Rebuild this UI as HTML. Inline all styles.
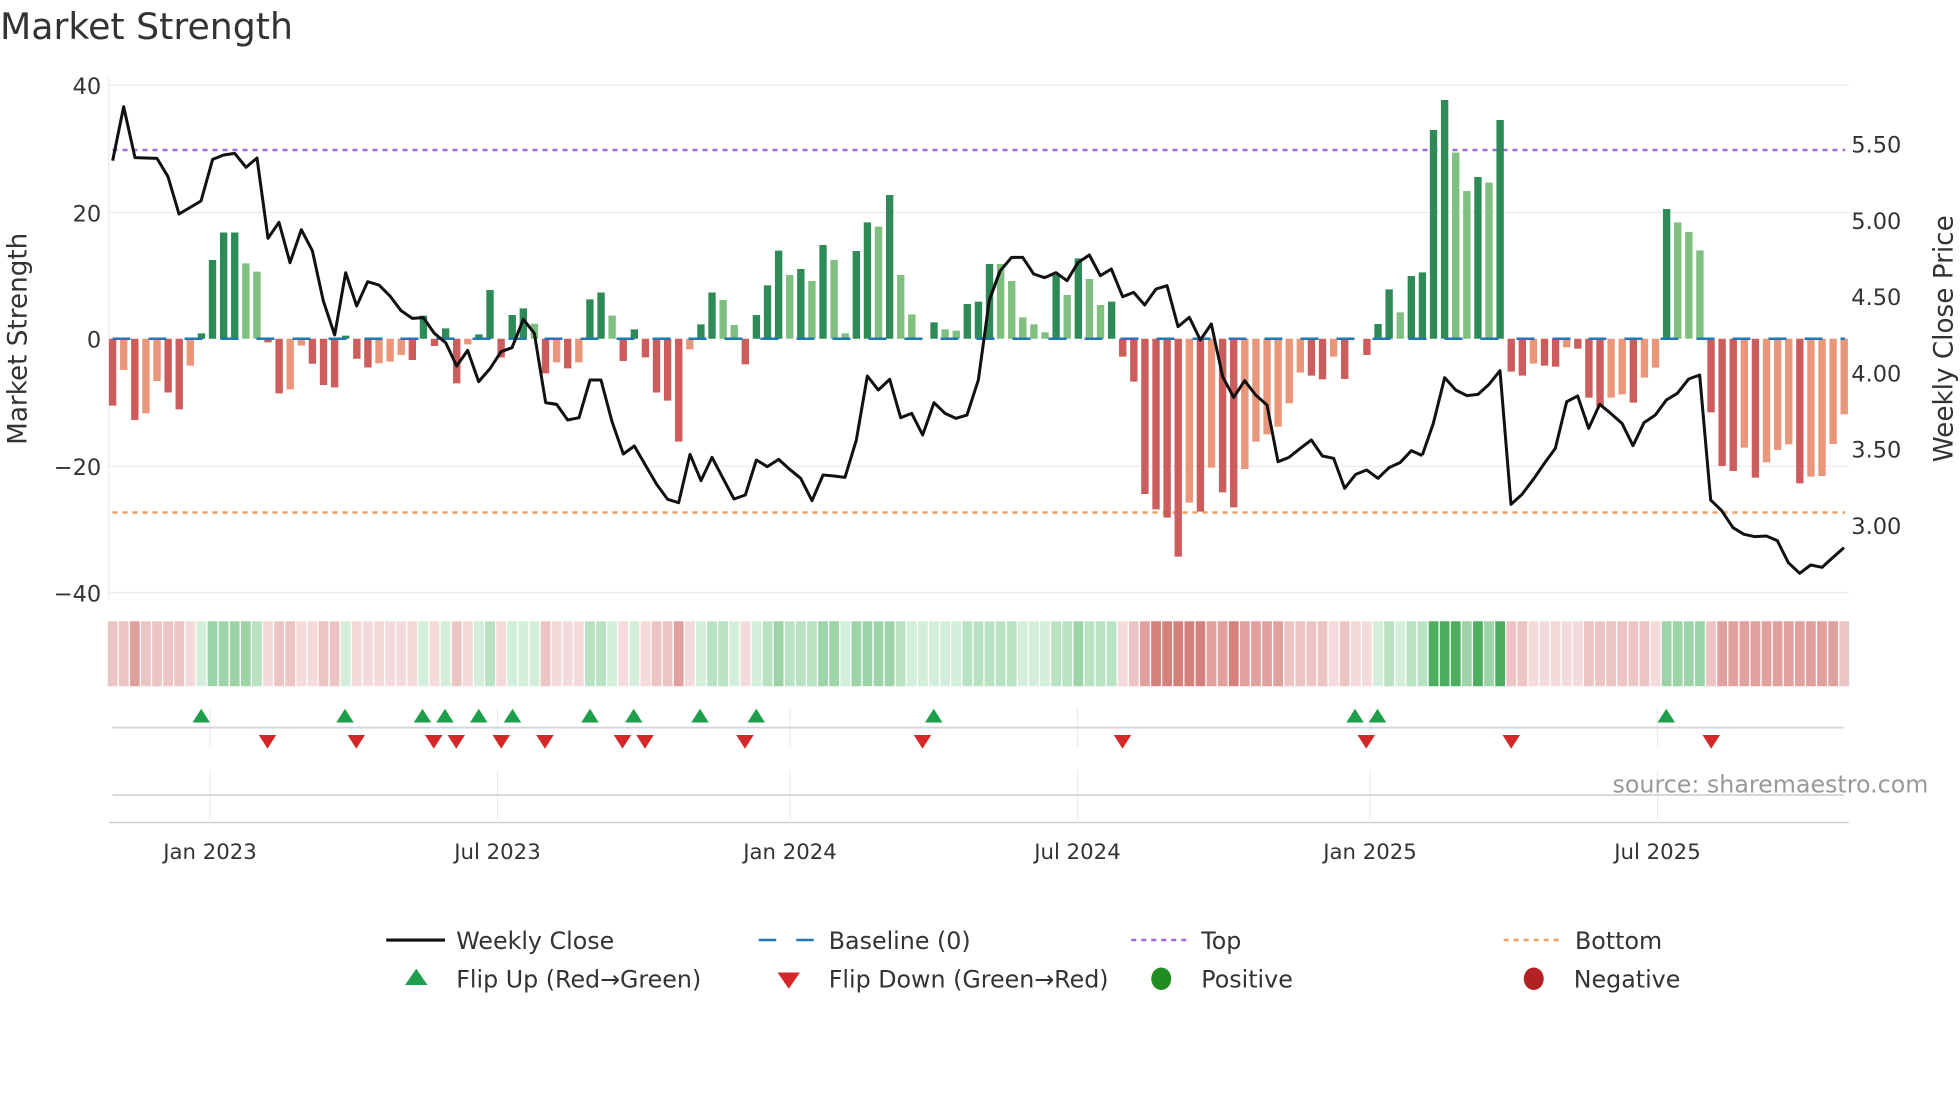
<!DOCTYPE html>
<html><head><meta charset="utf-8"><style>
html,body{margin:0;padding:0;background:#fff;}
svg{display:block;font-family:"DejaVu Sans","Liberation Sans",sans-serif;}
.DG{fill:#2e8b57}.LG{fill:#7fbf7f}.DR{fill:#cd5c5c}.LR{fill:#e9967a}
.g1{fill:#d3eedb}.g2{fill:#b8e2c2}.g3{fill:#9cd4a8}.g4{fill:#4cae5e}
.r1{fill:#f4dada}.r2{fill:#ecc4c4}.r3{fill:#e0a09e}.r4{fill:#d4807b}
.tk{font-size:18px;fill:#333}
</style></head><body>
<svg width="1960" height="1102" viewBox="0 0 1960 1102" xmlns="http://www.w3.org/2000/svg">
<rect width="1960" height="1102" fill="#fff"/>
<g transform="scale(1.25)">
<text x="0" y="31" font-size="29" fill="#333">Market Strength</text>
<!-- grid -->
<g stroke="#ececec" stroke-width="1">
<line x1="87" y1="68" x2="1479" y2="68"/><line x1="87" y1="170" x2="1479" y2="170"/>
<line x1="87" y1="373" x2="1479" y2="373"/><line x1="87" y1="474" x2="1479" y2="474"/>
<line x1="87" y1="62" x2="87" y2="480"/>
</g>
<g class="tk" text-anchor="end">
<text x="81" y="75">40</text><text x="81" y="177">20</text><text x="81" y="278">0</text>
<text x="81" y="380">−20</text><text x="81" y="481">−40</text>
</g>
<g class="tk">
<text x="1481" y="122">5.50</text><text x="1481" y="183">5.00</text><text x="1481" y="244">4.50</text>
<text x="1481" y="305">4.00</text><text x="1481" y="366">3.50</text><text x="1481" y="427">3.00</text>
</g>
<text transform="translate(21,271) rotate(-90)" text-anchor="middle" font-size="21" fill="#333">Market Strength</text>
<text transform="translate(1562,271) rotate(-90)" text-anchor="middle" font-size="21" fill="#333">Weekly Close Price</text>
<line x1="90" y1="120" x2="1476" y2="120" stroke="#a066e0" stroke-width="2" stroke-dasharray="4,4"/>
<line x1="90" y1="410" x2="1476" y2="410" stroke="#f0a060" stroke-width="2" stroke-dasharray="4,4"/>
<!-- bars -->
<g transform="translate(87.15,0) scale(8.88,1)">
<rect class="DR" x="0" y="271" width=".664" height="53.5"/>
<rect class="LR" x="1" y="271" width=".664" height="25"/>
<rect class="DR" x="2" y="271" width=".664" height="65"/>
<rect class="LR" x="3" y="271" width=".664" height="59.7"/>
<rect class="LR" x="4" y="271" width=".664" height="33.8"/>
<rect class="DR" x="5" y="271" width=".664" height="43"/>
<rect class="DR" x="6" y="271" width=".664" height="56.5"/>
<rect class="LR" x="7" y="271" width=".664" height="21.5"/>
<rect class="DG" x="8" y="266.7" width=".664" height="4.3"/>
<rect class="DG" x="9" y="208" width=".664" height="63"/>
<rect class="DG" x="10" y="186" width=".664" height="85"/>
<rect class="DG" x="11" y="186" width=".664" height="85"/>
<rect class="LG" x="12" y="210.7" width=".664" height="60.3"/>
<rect class="LG" x="13" y="217.3" width=".664" height="53.7"/>
<rect class="DR" x="14" y="271" width=".664" height="2.9"/>
<rect class="DR" x="15" y="271" width=".664" height="43.7"/>
<rect class="LR" x="16" y="271" width=".664" height="40.5"/>
<rect class="LR" x="17" y="271" width=".664" height="5.5"/>
<rect class="DR" x="18" y="271" width=".664" height="20"/>
<rect class="DR" x="19" y="271" width=".664" height="37"/>
<rect class="DR" x="20" y="271" width=".664" height="39"/>
<rect class="DG" x="21" y="268.5" width=".664" height="2.5"/>
<rect class="DR" x="22" y="271" width=".664" height="16"/>
<rect class="DR" x="23" y="271" width=".664" height="23"/>
<rect class="LR" x="24" y="271" width=".664" height="19.7"/>
<rect class="LR" x="25" y="271" width=".664" height="18.3"/>
<rect class="LR" x="26" y="271" width=".664" height="13"/>
<rect class="DR" x="27" y="271" width=".664" height="17"/>
<rect class="DG" x="28" y="252.5" width=".664" height="18.5"/>
<rect class="DR" x="29" y="271" width=".664" height="5.8"/>
<rect class="DG" x="30" y="262.7" width=".664" height="8.3"/>
<rect class="DR" x="31" y="271" width=".664" height="35.7"/>
<rect class="LR" x="32" y="271" width=".664" height="4.5"/>
<rect class="DG" x="33" y="267.5" width=".664" height="3.5"/>
<rect class="DG" x="34" y="232" width=".664" height="39"/>
<rect class="DR" x="35" y="271" width=".664" height="15"/>
<rect class="DG" x="36" y="252" width=".664" height="19"/>
<rect class="DG" x="37" y="246.7" width=".664" height="24.3"/>
<rect class="LG" x="38" y="259" width=".664" height="12"/>
<rect class="DR" x="39" y="271" width=".664" height="27.7"/>
<rect class="LR" x="40" y="271" width=".664" height="18.9"/>
<rect class="DR" x="41" y="271" width=".664" height="23.7"/>
<rect class="LR" x="42" y="271" width=".664" height="18.9"/>
<rect class="DG" x="43" y="239.5" width=".664" height="31.5"/>
<rect class="DG" x="44" y="234" width=".664" height="37"/>
<rect class="LG" x="45" y="252.5" width=".664" height="18.5"/>
<rect class="DR" x="46" y="271" width=".664" height="17.8"/>
<rect class="DG" x="47" y="263.5" width=".664" height="7.5"/>
<rect class="DR" x="48" y="271" width=".664" height="14.9"/>
<rect class="DR" x="49" y="271" width=".664" height="43"/>
<rect class="DR" x="50" y="271" width=".664" height="49.5"/>
<rect class="DR" x="51" y="271" width=".664" height="82.3"/>
<rect class="LR" x="52" y="271" width=".664" height="8.5"/>
<rect class="DG" x="53" y="259.5" width=".664" height="11.5"/>
<rect class="DG" x="54" y="234" width=".664" height="37"/>
<rect class="LG" x="55" y="240" width=".664" height="31"/>
<rect class="LG" x="56" y="260" width=".664" height="11"/>
<rect class="DR" x="57" y="271" width=".664" height="20.5"/>
<rect class="DG" x="58" y="252" width=".664" height="19"/>
<rect class="DG" x="59" y="228.3" width=".664" height="42.7"/>
<rect class="DG" x="60" y="200.5" width=".664" height="70.5"/>
<rect class="LG" x="61" y="220" width=".664" height="51"/>
<rect class="DG" x="62" y="215.2" width=".664" height="55.8"/>
<rect class="LG" x="63" y="224.8" width=".664" height="46.2"/>
<rect class="DG" x="64" y="196" width=".664" height="75"/>
<rect class="LG" x="65" y="208" width=".664" height="63"/>
<rect class="LG" x="66" y="266.7" width=".664" height="4.3"/>
<rect class="DG" x="67" y="200.8" width=".664" height="70.2"/>
<rect class="DG" x="68" y="177.9" width=".664" height="93.1"/>
<rect class="LG" x="69" y="181.3" width=".664" height="89.7"/>
<rect class="DG" x="70" y="156" width=".664" height="115"/>
<rect class="LG" x="71" y="220" width=".664" height="51"/>
<rect class="LG" x="72" y="251.5" width=".664" height="19.5"/>
<rect class="DG" x="74" y="257.9" width=".664" height="13.1"/>
<rect class="LG" x="75" y="263.5" width=".664" height="7.5"/>
<rect class="LG" x="76" y="264.5" width=".664" height="6.5"/>
<rect class="DG" x="77" y="243.2" width=".664" height="27.8"/>
<rect class="DG" x="78" y="241.3" width=".664" height="29.7"/>
<rect class="DG" x="79" y="211.2" width=".664" height="59.8"/>
<rect class="LG" x="80" y="211.2" width=".664" height="59.8"/>
<rect class="LG" x="81" y="224.8" width=".664" height="46.2"/>
<rect class="LG" x="82" y="253.9" width=".664" height="17.1"/>
<rect class="LG" x="83" y="259.5" width=".664" height="11.5"/>
<rect class="LG" x="84" y="265.9" width=".664" height="5.1"/>
<rect class="DG" x="85" y="220" width=".664" height="51"/>
<rect class="LG" x="86" y="236" width=".664" height="35"/>
<rect class="DG" x="87" y="206.7" width=".664" height="64.3"/>
<rect class="LG" x="88" y="223.2" width=".664" height="47.8"/>
<rect class="LG" x="89" y="244" width=".664" height="27"/>
<rect class="DG" x="90" y="241.3" width=".664" height="29.7"/>
<rect class="DR" x="91" y="271" width=".664" height="14.3"/>
<rect class="DR" x="92" y="271" width=".664" height="34.3"/>
<rect class="DR" x="93" y="271" width=".664" height="124.2"/>
<rect class="DR" x="94" y="271" width=".664" height="136.5"/>
<rect class="DR" x="95" y="271" width=".664" height="143.1"/>
<rect class="DR" x="96" y="271" width=".664" height="174.3"/>
<rect class="LR" x="97" y="271" width=".664" height="131.1"/>
<rect class="DR" x="98" y="271" width=".664" height="138.3"/>
<rect class="LR" x="99" y="271" width=".664" height="103.1"/>
<rect class="DR" x="100" y="271" width=".664" height="122.9"/>
<rect class="DR" x="101" y="271" width=".664" height="134.9"/>
<rect class="LR" x="102" y="271" width=".664" height="104.2"/>
<rect class="LR" x="103" y="271" width=".664" height="82.3"/>
<rect class="LR" x="104" y="271" width=".664" height="76.5"/>
<rect class="LR" x="105" y="271" width=".664" height="70.3"/>
<rect class="LR" x="106" y="271" width=".664" height="51.7"/>
<rect class="LR" x="107" y="271" width=".664" height="27.1"/>
<rect class="DR" x="108" y="271" width=".664" height="29.5"/>
<rect class="DR" x="109" y="271" width=".664" height="32.5"/>
<rect class="LR" x="110" y="271" width=".664" height="14.3"/>
<rect class="DR" x="111" y="271" width=".664" height="32.2"/>
<rect class="DR" x="113" y="271" width=".664" height="13"/>
<rect class="DG" x="114" y="259.2" width=".664" height="11.8"/>
<rect class="DG" x="115" y="231.5" width=".664" height="39.5"/>
<rect class="LG" x="116" y="249.9" width=".664" height="21.1"/>
<rect class="DG" x="117" y="220.8" width=".664" height="50.2"/>
<rect class="DG" x="118" y="217.9" width=".664" height="53.1"/>
<rect class="DG" x="119" y="104" width=".664" height="167"/>
<rect class="DG" x="120" y="80" width=".664" height="191"/>
<rect class="LG" x="121" y="122.1" width=".664" height="148.9"/>
<rect class="LG" x="122" y="152.8" width=".664" height="118.2"/>
<rect class="DG" x="123" y="141.6" width=".664" height="129.4"/>
<rect class="LG" x="124" y="146.1" width=".664" height="124.9"/>
<rect class="DG" x="125" y="96" width=".664" height="175"/>
<rect class="DR" x="126" y="271" width=".664" height="26.3"/>
<rect class="DR" x="127" y="271" width=".664" height="29.5"/>
<rect class="LR" x="128" y="271" width=".664" height="19.9"/>
<rect class="DR" x="129" y="271" width=".664" height="21.5"/>
<rect class="DR" x="130" y="271" width=".664" height="22.3"/>
<rect class="LR" x="131" y="271" width=".664" height="6.9"/>
<rect class="DR" x="132" y="271" width=".664" height="7.9"/>
<rect class="DR" x="133" y="271" width=".664" height="47.1"/>
<rect class="DR" x="134" y="271" width=".664" height="54.3"/>
<rect class="LR" x="135" y="271" width=".664" height="47.1"/>
<rect class="LR" x="136" y="271" width=".664" height="44.5"/>
<rect class="DR" x="137" y="271" width=".664" height="51.1"/>
<rect class="LR" x="138" y="271" width=".664" height="31.1"/>
<rect class="LR" x="139" y="271" width=".664" height="23.1"/>
<rect class="DG" x="140" y="167.2" width=".664" height="103.8"/>
<rect class="LG" x="141" y="177.9" width=".664" height="93.1"/>
<rect class="LG" x="142" y="185.6" width=".664" height="85.4"/>
<rect class="LG" x="143" y="200.3" width=".664" height="70.7"/>
<rect class="DR" x="144" y="271" width=".664" height="58.9"/>
<rect class="DR" x="145" y="271" width=".664" height="101.8"/>
<rect class="DR" x="146" y="271" width=".664" height="105.8"/>
<rect class="LR" x="147" y="271" width=".664" height="87.1"/>
<rect class="DR" x="148" y="271" width=".664" height="111.1"/>
<rect class="LR" x="149" y="271" width=".664" height="98.9"/>
<rect class="LR" x="150" y="271" width=".664" height="89"/>
<rect class="LR" x="151" y="271" width=".664" height="84.5"/>
<rect class="DR" x="152" y="271" width=".664" height="115.7"/>
<rect class="LR" x="153" y="271" width=".664" height="110.3"/>
<rect class="LR" x="154" y="271" width=".664" height="109.8"/>
<rect class="LR" x="155" y="271" width=".664" height="84.2"/>
<rect class="LR" x="156" y="271" width=".664" height="60.5"/>
</g>
<line x1="90" y1="271" x2="1476" y2="271" stroke="#1f77b4" stroke-width="2" stroke-dasharray="14.4,14.4"/>
<!-- price line -->
<g fill="none" stroke="#111" stroke-width="9" stroke-linejoin="round">
<polyline transform="translate(80,64) scale(0.26667)" points="38,242 71,80 105,233 171,235 204,290 237,402 303,363 338,238 371,225 404,220 438,262 471,234 504,475 537,427 570,548 604,449 637,512 670,663 704,765 737,578 770,678 803,605 837,615 870,648 903,692 937,715 970,713 1003,760 1037,788 1070,858 1103,811 1136,905 1170,866 1203,815 1236,803 1270,718 1303,760 1337,968 1370,973"/>
<polyline transform="translate(432,64) scale(0.26667)" points="17,968 50,973 83,1020 117,1013 150,900 183,900 216,1025 250,1122 283,1098 316,1155 350,1213 383,1258 416,1268 450,1123 483,1202 516,1132 549,1195 582,1257 616,1245 649,1140 682,1160 716,1138 749,1168 782,1195 816,1262 849,1185 882,1188 915,1192 949,1080 982,888 1015,930 1049,898 1082,1013 1115,1000 1148,1065 1182,968 1215,1000 1248,1015 1281,1005 1315,900 1348,660 1381,570"/>
<polyline transform="translate(784,64) scale(0.26667)" points="28,660 61,572 95,532 128,532 161,582 194,593 228,578 261,602 294,548 328,525 361,587 394,567 428,650 461,637 494,675 528,627 561,617 594,740 628,712 661,780 694,732 728,890 761,952 794,902 827,945 861,975 894,1145 927,1132 961,1105 994,1080 1027,1128 1061,1135 1094,1225 1127,1183 1160,1170 1194,1195 1227,1163 1260,1148 1294,1112 1327,1127"/>
<polyline transform="translate(1136,64) scale(0.26667)" points="7,1125 40,1030 74,893 107,930 141,947 174,943 207,913 240,872 273,1273 306,1243 340,1198 373,1150 406,1105 440,965 473,948 506,1045 539,973 572,1000 606,1030 639,1097 672,1028 706,1005 739,960 772,940 806,897 839,885 872,1260 905,1292 939,1343 972,1363 1005,1370 1039,1368 1072,1382 1105,1448 1139,1480 1172,1455 1206,1462 1239,1432 1272,1403"/>
</g>
<!-- heat strip -->
<g transform="translate(86.2,0) scale(8.88,1)">
<rect class="r2" x="0" y="497" width=".88" height="52"/><rect class="r2" x="1" y="497" width=".88" height="52"/><rect class="r3" x="2" y="497" width=".88" height="52"/><rect class="r2" x="3" y="497" width=".88" height="52"/><rect class="r2" x="4" y="497" width=".88" height="52"/><rect class="r2" x="5" y="497" width=".88" height="52"/><rect class="r2" x="6" y="497" width=".88" height="52"/><rect class="r1" x="7" y="497" width=".88" height="52"/>
<rect class="g1" x="8" y="497" width=".88" height="52"/><rect class="g3" x="9" y="497" width=".88" height="52"/><rect class="g3" x="10" y="497" width=".88" height="52"/><rect class="g3" x="11" y="497" width=".88" height="52"/><rect class="g3" x="12" y="497" width=".88" height="52"/><rect class="g2" x="13" y="497" width=".88" height="52"/>
<rect class="r1" x="14" y="497" width=".88" height="52"/><rect class="r2" x="15" y="497" width=".88" height="52"/><rect class="r2" x="16" y="497" width=".88" height="52"/><rect class="r1" x="17" y="497" width=".88" height="52"/><rect class="r1" x="18" y="497" width=".88" height="52"/><rect class="r2" x="19" y="497" width=".88" height="52"/><rect class="r2" x="20" y="497" width=".88" height="52"/><rect class="g1" x="21" y="497" width=".88" height="52"/>
<rect class="r1" x="22" y="497" width=".88" height="52"/><rect class="r1" x="23" y="497" width=".88" height="52"/><rect class="r1" x="24" y="497" width=".88" height="52"/><rect class="r1" x="25" y="497" width=".88" height="52"/><rect class="r1" x="26" y="497" width=".88" height="52"/><rect class="r1" x="27" y="497" width=".88" height="52"/><rect class="g1" x="28" y="497" width=".88" height="52"/><rect class="r1" x="29" y="497" width=".88" height="52"/>
<rect class="g1" x="30" y="497" width=".88" height="52"/><rect class="r2" x="31" y="497" width=".88" height="52"/><rect class="r1" x="32" y="497" width=".88" height="52"/><rect class="g1" x="33" y="497" width=".88" height="52"/><rect class="g2" x="34" y="497" width=".88" height="52"/><rect class="r1" x="35" y="497" width=".88" height="52"/><rect class="g1" x="36" y="497" width=".88" height="52"/><rect class="g1" x="37" y="497" width=".88" height="52"/>
<rect class="g1" x="38" y="497" width=".88" height="52"/><rect class="r2" x="39" y="497" width=".88" height="52"/><rect class="r1" x="40" y="497" width=".88" height="52"/><rect class="r1" x="41" y="497" width=".88" height="52"/><rect class="r1" x="42" y="497" width=".88" height="52"/><rect class="g2" x="43" y="497" width=".88" height="52"/><rect class="g2" x="44" y="497" width=".88" height="52"/><rect class="g1" x="45" y="497" width=".88" height="52"/>
<rect class="r1" x="46" y="497" width=".88" height="52"/><rect class="g1" x="47" y="497" width=".88" height="52"/><rect class="r1" x="48" y="497" width=".88" height="52"/><rect class="r2" x="49" y="497" width=".88" height="52"/><rect class="r2" x="50" y="497" width=".88" height="52"/><rect class="r3" x="51" y="497" width=".88" height="52"/><rect class="r1" x="52" y="497" width=".88" height="52"/><rect class="g1" x="53" y="497" width=".88" height="52"/>
<rect class="g2" x="54" y="497" width=".88" height="52"/><rect class="g2" x="55" y="497" width=".88" height="52"/><rect class="g1" x="56" y="497" width=".88" height="52"/><rect class="r1" x="57" y="497" width=".88" height="52"/><rect class="g1" x="58" y="497" width=".88" height="52"/><rect class="g2" x="59" y="497" width=".88" height="52"/><rect class="g3" x="60" y="497" width=".88" height="52"/><rect class="g2" x="61" y="497" width=".88" height="52"/>
<rect class="g2" x="62" y="497" width=".88" height="52"/><rect class="g2" x="63" y="497" width=".88" height="52"/><rect class="g3" x="64" y="497" width=".88" height="52"/><rect class="g3" x="65" y="497" width=".88" height="52"/><rect class="g1" x="66" y="497" width=".88" height="52"/><rect class="g3" x="67" y="497" width=".88" height="52"/><rect class="g3" x="68" y="497" width=".88" height="52"/><rect class="g3" x="69" y="497" width=".88" height="52"/>
<rect class="g3" x="70" y="497" width=".88" height="52"/><rect class="g2" x="71" y="497" width=".88" height="52"/><rect class="g1" x="72" y="497" width=".88" height="52"/><rect class="g1" x="73" y="497" width=".88" height="52"/><rect class="g1" x="74" y="497" width=".88" height="52"/><rect class="g1" x="75" y="497" width=".88" height="52"/><rect class="g1" x="76" y="497" width=".88" height="52"/><rect class="g2" x="77" y="497" width=".88" height="52"/>
<rect class="g2" x="78" y="497" width=".88" height="52"/><rect class="g2" x="79" y="497" width=".88" height="52"/><rect class="g2" x="80" y="497" width=".88" height="52"/><rect class="g2" x="81" y="497" width=".88" height="52"/><rect class="g1" x="82" y="497" width=".88" height="52"/><rect class="g1" x="83" y="497" width=".88" height="52"/><rect class="g1" x="84" y="497" width=".88" height="52"/><rect class="g2" x="85" y="497" width=".88" height="52"/>
<rect class="g2" x="86" y="497" width=".88" height="52"/><rect class="g3" x="87" y="497" width=".88" height="52"/><rect class="g2" x="88" y="497" width=".88" height="52"/><rect class="g2" x="89" y="497" width=".88" height="52"/><rect class="g2" x="90" y="497" width=".88" height="52"/><rect class="r1" x="91" y="497" width=".88" height="52"/><rect class="r2" x="92" y="497" width=".88" height="52"/><rect class="r3" x="93" y="497" width=".88" height="52"/>
<rect class="r4" x="94" y="497" width=".88" height="52"/><rect class="r4" x="95" y="497" width=".88" height="52"/><rect class="r4" x="96" y="497" width=".88" height="52"/><rect class="r4" x="97" y="497" width=".88" height="52"/><rect class="r4" x="98" y="497" width=".88" height="52"/><rect class="r3" x="99" y="497" width=".88" height="52"/><rect class="r3" x="100" y="497" width=".88" height="52"/><rect class="r4" x="101" y="497" width=".88" height="52"/>
<rect class="r3" x="102" y="497" width=".88" height="52"/><rect class="r3" x="103" y="497" width=".88" height="52"/><rect class="r3" x="104" y="497" width=".88" height="52"/><rect class="r3" x="105" y="497" width=".88" height="52"/><rect class="r2" x="106" y="497" width=".88" height="52"/><rect class="r2" x="107" y="497" width=".88" height="52"/><rect class="r2" x="108" y="497" width=".88" height="52"/><rect class="r2" x="109" y="497" width=".88" height="52"/>
<rect class="r1" x="110" y="497" width=".88" height="52"/><rect class="r2" x="111" y="497" width=".88" height="52"/><rect class="r1" x="112" y="497" width=".88" height="52"/><rect class="r1" x="113" y="497" width=".88" height="52"/><rect class="g1" x="114" y="497" width=".88" height="52"/><rect class="g2" x="115" y="497" width=".88" height="52"/><rect class="g1" x="116" y="497" width=".88" height="52"/><rect class="g2" x="117" y="497" width=".88" height="52"/>
<rect class="g2" x="118" y="497" width=".88" height="52"/><rect class="g4" x="119" y="497" width=".88" height="52"/><rect class="g4" x="120" y="497" width=".88" height="52"/><rect class="g4" x="121" y="497" width=".88" height="52"/><rect class="g3" x="122" y="497" width=".88" height="52"/><rect class="g4" x="123" y="497" width=".88" height="52"/><rect class="g3" x="124" y="497" width=".88" height="52"/><rect class="g4" x="125" y="497" width=".88" height="52"/>
<rect class="r2" x="126" y="497" width=".88" height="52"/><rect class="r2" x="127" y="497" width=".88" height="52"/><rect class="r1" x="128" y="497" width=".88" height="52"/><rect class="r1" x="129" y="497" width=".88" height="52"/><rect class="r1" x="130" y="497" width=".88" height="52"/><rect class="r1" x="131" y="497" width=".88" height="52"/><rect class="r1" x="132" y="497" width=".88" height="52"/><rect class="r2" x="133" y="497" width=".88" height="52"/>
<rect class="r2" x="134" y="497" width=".88" height="52"/><rect class="r2" x="135" y="497" width=".88" height="52"/><rect class="r2" x="136" y="497" width=".88" height="52"/><rect class="r2" x="137" y="497" width=".88" height="52"/><rect class="r2" x="138" y="497" width=".88" height="52"/><rect class="r1" x="139" y="497" width=".88" height="52"/><rect class="g3" x="140" y="497" width=".88" height="52"/><rect class="g3" x="141" y="497" width=".88" height="52"/>
<rect class="g3" x="142" y="497" width=".88" height="52"/><rect class="g3" x="143" y="497" width=".88" height="52"/><rect class="r2" x="144" y="497" width=".88" height="52"/><rect class="r3" x="145" y="497" width=".88" height="52"/><rect class="r3" x="146" y="497" width=".88" height="52"/><rect class="r3" x="147" y="497" width=".88" height="52"/><rect class="r3" x="148" y="497" width=".88" height="52"/><rect class="r3" x="149" y="497" width=".88" height="52"/>
<rect class="r3" x="150" y="497" width=".88" height="52"/><rect class="r3" x="151" y="497" width=".88" height="52"/><rect class="r3" x="152" y="497" width=".88" height="52"/><rect class="r3" x="153" y="497" width=".88" height="52"/><rect class="r3" x="154" y="497" width=".88" height="52"/><rect class="r3" x="155" y="497" width=".88" height="52"/><rect class="r2" x="156" y="497" width=".88" height="52"/>
</g>
<!-- marker rows -->
<g stroke="#ececec" stroke-width="1">
<line x1="168" y1="566" x2="168" y2="598"/><line x1="398" y1="566" x2="398" y2="598"/><line x1="632" y1="566" x2="632" y2="598"/><line x1="862" y1="566" x2="862" y2="598"/><line x1="1096" y1="566" x2="1096" y2="598"/><line x1="1326" y1="566" x2="1326" y2="598"/>
<line x1="168" y1="616" x2="168" y2="656"/><line x1="398" y1="616" x2="398" y2="656"/><line x1="632" y1="616" x2="632" y2="656"/><line x1="862" y1="616" x2="862" y2="656"/><line x1="1096" y1="616" x2="1096" y2="656"/><line x1="1326" y1="616" x2="1326" y2="656"/>
</g>
<line x1="90" y1="582" x2="1475" y2="582" stroke="#d4d6da" stroke-width="1.5"/>
<line x1="90" y1="636" x2="1475" y2="636" stroke="#d4d6da" stroke-width="1.5"/>
<line x1="87" y1="658" x2="1479" y2="658" stroke="#cfcfcf" stroke-width="1.2"/>
<g fill="#1e9e4a">
<path d="M154,578L161,567L168,578Z"/>
<path d="M269,578L276,567L283,578Z"/><path d="M331,578L338,567L345,578Z"/><path d="M349,578L356,567L363,578Z"/><path d="M376,578L383,567L390,578Z"/><path d="M403,578L410,567L417,578Z"/><path d="M465,578L472,567L479,578Z"/><path d="M500,578L507,567L514,578Z"/><path d="M553,578L560,567L567,578Z"/><path d="M598,578L605,567L612,578Z"/><path d="M740,578L747,567L754,578Z"/><path d="M1077,578L1084,567L1091,578Z"/><path d="M1095,578L1102,567L1109,578Z"/><path d="M1326,578L1333,567L1340,578Z"/>
</g>
<g fill="#d62728">
<path d="M207,588L214,599L221,588Z"/><path d="M278,588L285,599L292,588Z"/><path d="M340,588L347,599L354,588Z"/><path d="M358,588L365,599L372,588Z"/><path d="M394,588L401,599L408,588Z"/><path d="M429,588L436,599L443,588Z"/><path d="M491,588L498,599L505,588Z"/><path d="M509,588L516,599L523,588Z"/><path d="M589,588L596,599L603,588Z"/><path d="M731,588L738,599L745,588Z"/><path d="M891,588L898,599L905,588Z"/><path d="M1086,588L1093,599L1100,588Z"/><path d="M1202,588L1209,599L1216,588Z"/><path d="M1362,588L1369,599L1376,588Z"/>
</g>
<text x="1290" y="634" font-size="19" fill="#999">source: sharemaestro.com</text>
<g font-size="17" fill="#333" text-anchor="middle">
<text x="168" y="687">Jan 2023</text><text x="398" y="687">Jul 2023</text><text x="632" y="687">Jan 2024</text><text x="862" y="687">Jul 2024</text><text x="1096" y="687">Jan 2025</text><text x="1326" y="687">Jul 2025</text>
</g>
<!-- legend -->
<g font-size="19" fill="#333">
<line x1="309" y1="752" x2="356" y2="752" stroke="#111" stroke-width="2.5"/>
<text x="365" y="759">Weekly Close</text>
<line x1="607" y1="752" x2="651" y2="752" stroke="#1f77b4" stroke-width="2" stroke-dasharray="14,16"/>
<text x="663" y="759">Baseline (0)</text>
<line x1="905" y1="752" x2="949" y2="752" stroke="#a066e0" stroke-width="2" stroke-dasharray="4,4"/>
<text x="961" y="759">Top</text>
<line x1="1203" y1="752" x2="1248" y2="752" stroke="#f0a060" stroke-width="2" stroke-dasharray="4,4"/>
<text x="1260" y="759">Bottom</text>
<path d="M324,788L333,775L342,788Z" fill="#1e9e4a"/>
<text x="365" y="790">Flip Up (Red→Green)</text>
<path d="M622,778L631,791L640,778Z" fill="#d62728"/>
<text x="663" y="790">Flip Down (Green→Red)</text>
<ellipse cx="929" cy="783" rx="8" ry="9" fill="#228b22"/>
<text x="961" y="790">Positive</text>
<ellipse cx="1227" cy="783" rx="8" ry="9" fill="#b22222"/>
<text x="1259" y="790">Negative</text>
</g>
</g>
</svg>
</body></html>
